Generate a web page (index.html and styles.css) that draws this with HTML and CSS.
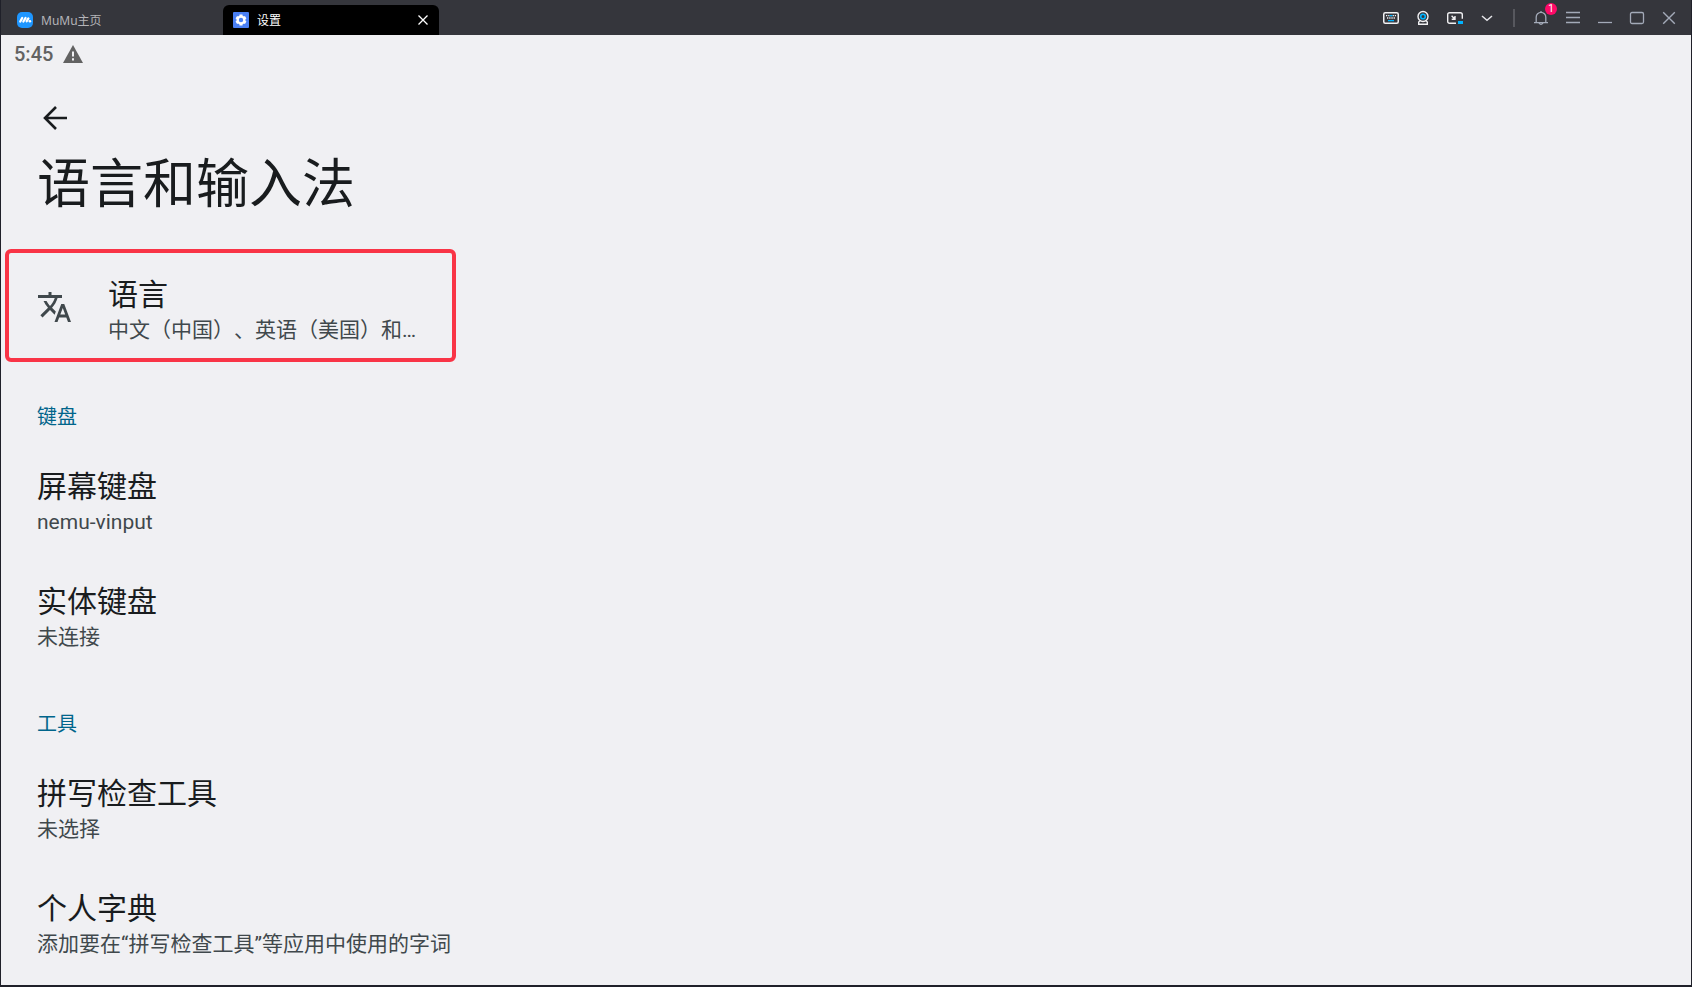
FILE: index.html
```
<!DOCTYPE html>
<html lang="zh-CN">
<head>
  <meta charset="UTF-8">
  <meta name="viewport" content="width=device-width, initial-scale=1.0">
  <title>语言和输入法</title>
  <link rel="stylesheet" href="styles.css">
</head>
<body>
  <div class="window">
    <header class="titlebar">
      <nav class="tabs">
        <a class="tab" href="#home">
          <svg class="tab-icon" viewBox="0 0 16 16">
            <rect width="16" height="16" rx="5" fill="#1e96ff"/>
            <path d="M3.3 9.5 5.2 6M6.4 9.5 8.5 6M9.7 9.2 11.4 6.4" stroke="#fff" stroke-width="2.3" stroke-linecap="round"/>
            <circle cx="12.9" cy="9.3" r="1.3" fill="#fff"/>
          </svg>
          <span>MuMu主页</span>
        </a>
        <div class="tab active">
          <svg class="tab-icon" viewBox="0 0 16 16">
            <rect width="16" height="16" rx="1" fill="#4a80f5"/>
            <path d="M8 2.6v10.8M3.3 5.3l9.4 5.4M12.7 5.3l-9.4 5.4" stroke="#fff" stroke-width="3"/>
            <circle cx="8" cy="8" r="3.4" fill="#4a80f5" stroke="#fff" stroke-width="2.4"/>
          </svg>
          <span>设置</span>
          <button class="tab-close" aria-label="关闭标签">
            <svg width="10" height="10" viewBox="0 0 10 10" stroke="#fff" stroke-width="1.3"><path d="M.5.5l9 9M9.5.5l-9 9"/></svg>
          </button>
        </div>
      </nav>

      <div class="tools">
        <button aria-label="键盘">
          <svg viewBox="0 0 16 16">
            <rect x=".75" y="2.75" width="14.5" height="10.5" rx="1.5" stroke="#f0f0f2" stroke-width="1.5"/>
            <path d="M3 5.7h10M4 8h8" stroke="#f0f0f2" stroke-width="1.3" stroke-dasharray="1.3 .9"/>
            <path d="M6.5 5.7h3M5 10.7h6" stroke="#00b4ff" stroke-width="1.3"/>
          </svg>
        </button>
        <button aria-label="摄像头">
          <svg viewBox="0 0 16 16">
            <circle cx="8" cy="6.5" r="5" stroke="#f0f0f2" stroke-width="1.4"/>
            <circle cx="8" cy="6.5" r="2.3" stroke="#00b4ff" stroke-width="1.6"/>
            <path d="M5 10.8 3.7 12v2.3h8.6V12L11 10.8" stroke="#f0f0f2" stroke-width="1.4"/>
          </svg>
        </button>
        <button aria-label="小窗">
          <svg viewBox="0 0 16 16">
            <path d="M9 13.3H2.7q-2 0-2-2V4.7q0-2 2-2h10.6q2 0 2 2v4" stroke="#f0f0f2" stroke-width="1.4"/>
            <path d="M4.6 5.8 8 9.2M8 6v3.3H4.7" stroke="#f0f0f2" stroke-width="1.4"/>
            <rect x="11" y="11" width="5" height="3" fill="#00b4ff"/>
          </svg>
        </button>
        <button aria-label="展开">
          <svg viewBox="0 0 16 16"><path d="M3 6l5 4.3L13 6" stroke="#e4e4e8" stroke-width="1.5"/></svg>
        </button>
        <span class="divider"></span>
        <button class="bell" aria-label="通知">
          <svg viewBox="0 0 16 16" stroke="#a3aab8" stroke-width="1.3">
            <path d="M1 12.6h14M3.2 12.5V7.2a4.8 4.8 0 0 1 9.6 0v5.3M8 2.4V1M6 13.2q2 2.4 4 0"/>
          </svg>
          <span class="badge">1</span>
        </button>
        <button aria-label="菜单">
          <svg viewBox="0 0 16 16"><path d="M1 2.5h14M1 7.5h14M1 12.5h14" stroke="#a3aab8" stroke-width="1.3"/></svg>
        </button>
        <button aria-label="最小化">
          <svg viewBox="0 0 16 16"><path d="M1 12.5h14" stroke="#a3aab8" stroke-width="1.3"/></svg>
        </button>
        <button aria-label="最大化">
          <svg viewBox="0 0 16 16"><rect x="1.5" y="2.5" width="13" height="11" rx="1.5" stroke="#a3aab8" stroke-width="1.3"/></svg>
        </button>
        <button aria-label="关闭">
          <svg viewBox="0 0 16 16"><path d="M2.2 2.2l11.6 11.6M13.8 2.2 2.2 13.8" stroke="#a3aab8" stroke-width="1.4"/></svg>
        </button>
      </div>
    </header>

    <main class="screen">
      <div class="status">
        <span>5:45</span>
        <svg width="20" height="18" viewBox="0 0 20 18">
          <path d="M10 0 20 18H0z" fill="#626262"/>
          <path d="M10 6.5v5M10 13.3v2.2" stroke="#f0f0f3" stroke-width="2"/>
        </svg>
      </div>

      <button class="back" aria-label="返回">
        <svg width="24" height="24" viewBox="0 0 24 24" stroke="#191c1e" stroke-width="2.6"><path d="M24 12H2M13 1 2 12l11 11"/></svg>
      </button>
      <h1>语言和输入法</h1>

      <a class="item highlight" href="#language">
        <svg class="translate" width="33" height="30" viewBox="1 2 22 20">
          <path fill="#40484c" d="M12.87 15.07l-2.54-2.51.03-.03c1.74-1.94 2.98-4.17 3.71-6.53H17V4h-7V2H8v2H1v1.99h11.17C11.5 7.92 10.44 9.75 9 11.35 8.07 10.32 7.3 9.19 6.69 8h-2c.73 1.63 1.73 3.17 2.98 4.56l-5.09 5.02L4 19l5-5 3.11 3.11.76-2.04zM18.5 10h-2L12 22h2l1.12-3h4.75L21 22h2l-4.5-12zm-2.62 7l1.62-4.33L19.12 17h-3.24z"/>
        </svg>
        <span class="text">
          <span class="title">语言</span>
          <span class="summary">中文（中国）、英语（美国）和…</span>
        </span>
      </a>

      <h2>键盘</h2>
      <a class="item" href="#screen-keyboard">
        <span class="text">
          <span class="title">屏幕键盘</span>
          <span class="summary">nemu-vinput</span>
        </span>
      </a>
      <a class="item" href="#physical-keyboard">
        <span class="text">
          <span class="title">实体键盘</span>
          <span class="summary">未连接</span>
        </span>
      </a>

      <h2>工具</h2>
      <a class="item" href="#spell">
        <span class="text">
          <span class="title">拼写检查工具</span>
          <span class="summary">未选择</span>
        </span>
      </a>
      <a class="item" href="#dictionary">
        <span class="text">
          <span class="title">个人字典</span>
          <span class="summary">添加要在“拼写检查工具”等应用中使用的字词</span>
        </span>
      </a>
    </main>
  </div>
</body>
</html>
```
FILE: styles.css
```
* {
  box-sizing: border-box;
}
body {
  margin: 0;
  font-family: Roboto, "Noto Sans CJK SC", sans-serif;
  color: #191c1e;
  text-spacing-trim: space-all;
}
a {
  color: inherit;
  text-decoration: none;
}
button {
  padding: 0;
  border: none;
  background: none;
  cursor: pointer;
}
svg {
  display: block;
  flex-shrink: 0;
  fill: none;
}
.window {
  display: flex;
  flex-direction: column;
  min-height: 100vh;
  border: 1px solid #1f2029;
  border-top: none;
  border-bottom-width: 2px;
  background: #f0f0f3;
}

/* title bar */
.titlebar {
  display: flex;
  justify-content: space-between;
  height: 35px;
  background: #35363c;
}
.tabs {
  display: flex;
  align-items: flex-end;
  font-family: "Noto Sans", "Noto Sans CJK SC", sans-serif;
  font-size: 12px;
}
.tab {
  display: flex;
  align-items: center;
  gap: 8px;
  width: 222px;
  height: 30px;
  padding: 0 16px;
  color: #b4b4b8;
}
.tab.active {
  width: 216px;
  padding: 0 11px 0 10px;
  border-radius: 6px 6px 0 0;
  background: #000;
  color: #fff;
}
.tab-icon {
  width: 16px;
  height: 16px;
}
.tab-close {
  margin-left: auto;
}
.tools {
  display: flex;
  align-items: center;
  padding-right: 6px;
}
.tools button {
  display: flex;
  align-items: center;
  justify-content: center;
  width: 32px;
  height: 35px;
}
.tools button svg {
  width: 16px;
  height: 16px;
}
.divider {
  width: 2px;
  height: 18px;
  margin: 0 10px;
  background: #57585e;
}
.bell {
  position: relative;
}
.badge {
  position: absolute;
  top: 3px;
  right: 0;
  width: 12px;
  height: 12px;
  border-radius: 50%;
  background: #ff0a68;
  color: #fff;
  font: 10px/12px Roboto, sans-serif;
  text-align: center;
}

/* settings screen */
.screen {
  flex: 1;
}
.status {
  display: flex;
  align-items: center;
  gap: 10px;
  height: 37px;
  padding-left: 13px;
  color: #626262;
  font-size: 20px;
  font-weight: 500;
}
.back {
  display: block;
  margin: 34px 0 0 42px;
}
h1 {
  margin: 15px 0 24px;
  padding-left: 36px;
  font-size: 53px;
  font-weight: 400;
  line-height: 80px;
}
h2 {
  margin: 0;
  padding: 38px 36px 11px;
  color: #00658b;
  font-size: 20px;
  font-weight: 400;
  line-height: 28px;
}
.item {
  display: flex;
  align-items: center;
  padding: 25px 36px 20px;
}
.item.highlight {
  width: fit-content;
  min-width: 451px;
  margin: 0 4px 3px;
  padding: 22px 29px 13px;
  border: 4px solid #f93446;
  border-radius: 6px;
}
.translate {
  margin: 0 37px 6px 0;
}
.title {
  display: block;
  font-size: 30px;
  line-height: 40px;
}
.summary {
  display: block;
  color: #40484c;
  font-size: 21px;
  line-height: 30px;
}
```
